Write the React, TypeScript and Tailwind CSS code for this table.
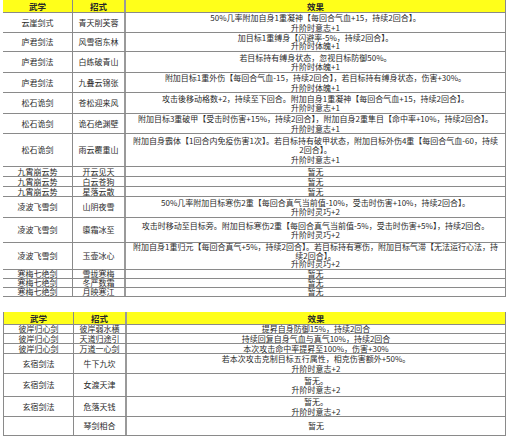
type Row = { a: string; b: string; lines: string[]; h: number }

const table1: Row[] = [
  { a: '云崖剑式', b: '青天削芙蓉', h: 20, lines: ['50%几率附加自身1重凝神【每回合气血+15，持续2回合】。', '升阶时意志+1'] },
  { a: '庐君剑法', b: '风雪宿东林', h: 19, lines: ['加目标1重缚身【闪避率-5%，持续2回合】。', '升阶时体魄+1'] },
  { a: '庐君剑法', b: '白练破青山', h: 21, lines: ['若目标持有缚身状态，忽视目标防御50%。', '升阶时体魄+1'] },
  { a: '庐君剑法', b: '九叠云锦张', h: 20, lines: ['附加目标1重外伤【每回合气血-15，持续2回合】，若目标持有缚身状态，伤害+30%。', '升阶时体魄+1'] },
  { a: '松石诡剑', b: '苍松迎来风', h: 21, lines: ['攻击後移动格数+2，持续至下回合。附加自身1重凝神【每回合气血+15，持续2回合】。', '升阶时意志+1'] },
  { a: '松石诡剑', b: '诡石绝渊壁', h: 20, lines: ['附加目标3重破甲【受击时伤害+15%，持续2回合】，附加自身2重隼目【命中率+10%，持续2回合】。', '升阶时意志+1'] },
  { a: '松石诡剑', b: '雨云覆重山', h: 33, lines: ['附加自身霸体【1回合内免疫伤害1次】。若目标持有破甲状态，附加目标外伤4重【每回合气血-60，持续', '2回合】。', '升阶时意志+1'] },
  { a: '九霄崩云势', b: '开云见天', h: 10, lines: ['暂无'] },
  { a: '九霄崩云势', b: '白云苍狗', h: 10, lines: ['暂无'] },
  { a: '九霄崩云势', b: '星落云散', h: 10, lines: ['暂无'] },
  { a: '凌波飞雪剑', b: '山阴夜雪', h: 21, lines: ['50%几率附加目标寒伤2重【每回合真气当前值-10%，受击时伤害+10%，持续2回合】。', '升阶时灵巧+2'] },
  { a: '凌波飞雪剑', b: '隳霜冰至', h: 25, lines: ['攻击时移动至目标旁。附加目标寒伤2重【每回合真气当前值-5%，受击时伤害+5%】，持续2回合。', '升阶时灵巧+2'] },
  { a: '凌波飞雪剑', b: '玉壶冰心', h: 27, lines: ['附加自身1重归元【每回合真气+5%，持续2回合】。若目标持有寒伤，附加目标气滞【无法运行心法，持', '续2回合】。', '升阶时灵巧+2'] },
  { a: '寒梅七绝剑', b: '雪拢寒梅', h: 9, lines: ['暂无'] },
  { a: '寒梅七绝剑', b: '冬严数霜', h: 9, lines: ['暂无'] },
  { a: '寒梅七绝剑', b: '月映寒江', h: 9, lines: ['暂无'] },
]

const table2: Row[] = [
  { a: '彼岸归心剑', b: '彼岸弱水横', h: 9, lines: ['提昇自身防御15%，持续2回合'] },
  { a: '彼岸归心剑', b: '天道归途引', h: 10, lines: ['持续回复自身气血与真气10%，持续2回合'] },
  { a: '彼岸归心剑', b: '万道一心剑', h: 10, lines: ['本次攻击命中率提昇至100%，伤害+30%'] },
  { a: '玄宿剑法', b: '牛下九坎', h: 20, lines: ['若本次攻击克制目标五行属性，相克伤害额外+50%。', '升阶时意志+2'] },
  { a: '玄宿剑法', b: '女渡天津', h: 23, lines: ['暂无。', '升阶时意志+2'] },
  { a: '玄宿剑法', b: '危落天钱', h: 20, lines: ['暂无。', '升阶时意志+2'] },
  { a: '', b: '琴剑相合', h: 19, lines: ['暂无'] },
]

function leading(r: Row) {
  if (r.h <= 10) return 'leading-[8px]'
  if (r.lines.length * 9.5 > r.h - 1) return 'leading-[8.5px]'
  return 'leading-[9.5px]'
}

function Header() {
  return (
    <div className="grid h-[13px] grid-cols-[70px_53px_1fr] border-b border-[#8a8a8a] bg-[#ffff1a] text-[8.5px] font-bold leading-[12px]">
      <div className="border-r border-[#8a8a8a] text-center">武学</div>
      <div className="border-r-2 border-[#9a9a9a] text-center">招式</div>
      <div className="text-center">效果</div>
    </div>
  )
}

function Table({ rows, left }: { rows: Row[]; left?: boolean }) {
  return (
    <div className={`w-[503px] border-r border-[#8a8a8a] ${left ? 'border-l' : ''}`}>
      <Header />
      {rows.map((r, i) => (
        <div
          key={i}
          className={`grid grid-cols-[70px_53px_1fr] border-b border-[#8a8a8a] ${leading(r)}`}
          style={{ height: r.h }}
        >
          <div className="flex items-center justify-center border-r border-[#8a8a8a] whitespace-nowrap">{r.a}</div>
          <div className="flex items-center justify-center border-r-2 border-[#9a9a9a] whitespace-nowrap">{r.b}</div>
          <div className="flex flex-col items-center justify-center">
            {r.lines.map((l, j) => (
              <div key={j} className="whitespace-nowrap">{l}</div>
            ))}
          </div>
        </div>
      ))}
    </div>
  )
}

export default function App() {
  return (
    <div
      className="h-[440px] w-[509px] overflow-hidden bg-white pl-[3px] text-[8px] text-[#2a2a2a]"
      style={{ fontFamily: '"Noto Sans CJK SC", "Noto Sans", sans-serif' }}
    >
      <Table rows={table1} />
      <div className="h-[15px]" />
      <Table rows={table2} left />
    </div>
  )
}
